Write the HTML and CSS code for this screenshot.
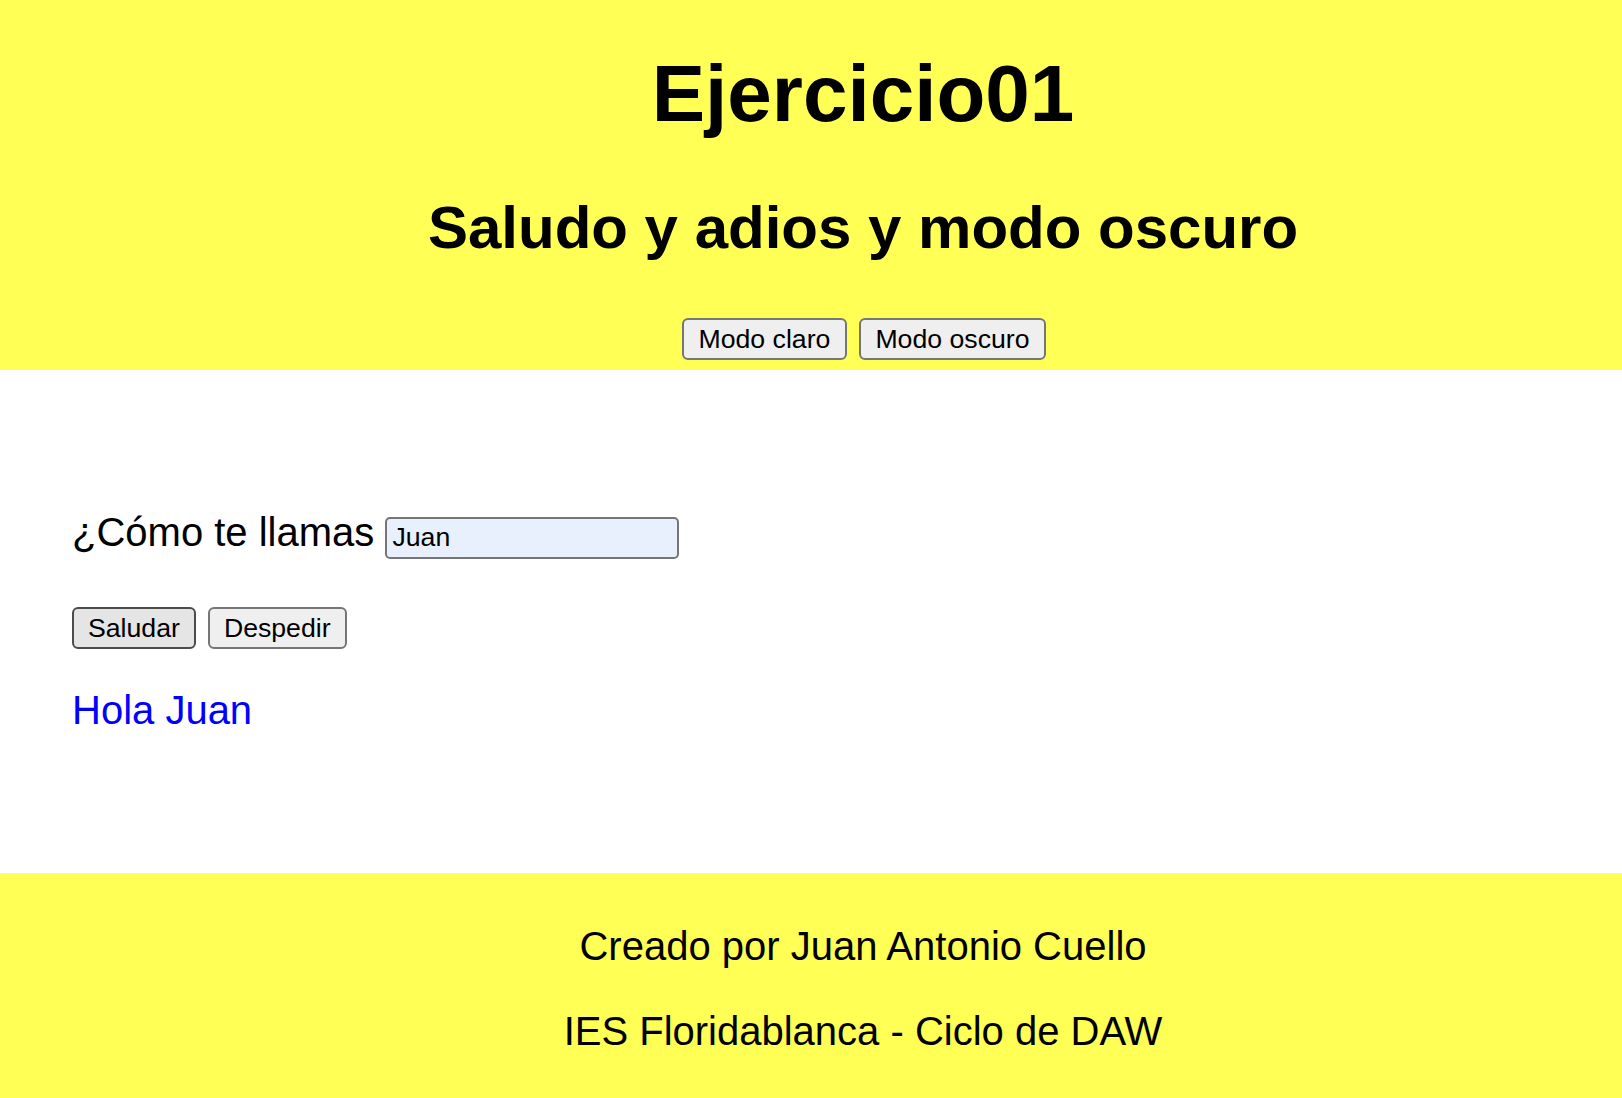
FILE: index.html
```html
<!DOCTYPE html>
<html lang="es">
<head>
<meta charset="utf-8">
<title>Ejercicio01</title>
<link rel="stylesheet" href="styles.css">
</head>
<body>
<header class="site-header">
  <h1 class="title">Ejercicio01</h1>
  <h2 class="subtitle">Saludo y adios y modo oscuro</h2>
  <div class="mode-buttons">
    <button class="btn">Modo claro</button>
    <button class="btn">Modo oscuro</button>
  </div>
</header>
<main class="content">
  <p class="question">¿Cómo te llamas <input class="name-input" type="text" value="Juan"></p>
  <div class="actions">
    <button class="btn btn-active">Saludar</button>
    <button class="btn">Despedir</button>
  </div>
  <p class="result">Hola Juan</p>
</main>
<footer class="site-footer">
  <p class="footer-line">Creado por Juan Antonio Cuello</p>
  <p class="footer-line">IES Floridablanca - Ciclo de DAW</p>
</footer>
</body>
</html>
```
FILE: styles.css
```css
html, body {
  margin: 0;
  padding: 0;
}
body {
  font-family: "Liberation Sans", Arial, Helvetica, sans-serif;
  font-size: 40px;
  color: #000;
  background: #fff;
}
.site-header {
  background: #ffff55;
  display: flow-root;
  text-align: center;
  padding: 0 0 10px 104px;
}
.title {
  font-size: 80px;
  font-weight: bold;
  line-height: normal;
  margin: 48px 0 53px;
}
.subtitle {
  font-size: 60px;
  font-weight: bold;
  line-height: normal;
  margin: 0 0 56px;
}
.mode-buttons {
  display: flex;
  justify-content: center;
  gap: 12px;
  padding-left: 2px;
}
.btn {
  font-family: "Liberation Sans", Arial, Helvetica, sans-serif;
  font-size: 26.67px;
  line-height: normal;
  color: #000;
  background: #efefef;
  border: 2px solid #767676;
  border-radius: 6px;
  padding: 4px 14.5px;
  height: 42px;
  margin: 0;
}
.btn-active {
  background: #e5e5e5;
  border-color: #4c4c4c;
}
.content {
  display: flow-root;
  padding: 100px 0 100px 72px;
}
.question {
  margin: 40px 0 0;
  line-height: normal;
}
.name-input {
  font-family: "Liberation Sans", Arial, Helvetica, sans-serif;
  font-size: 26.67px;
  color: #000;
  background: #e8f0fe;
  border: 2px solid #767676;
  border-radius: 5px;
  box-sizing: border-box;
  width: 294px;
  height: 42px;
  padding: 2px 5px;
  margin: 0;
}
.actions {
  display: flex;
  gap: 12px;
  margin-top: 48px;
  padding-left: 0;
}
.actions .btn {
  padding: 4px 14px;
}
.result {
  color: #0000ff;
  margin: 39px 0 40px;
  line-height: normal;
}
.site-footer {
  background: #ffff55;
  display: flow-root;
  text-align: center;
  padding: 11px 0 12px 104px;
}
.footer-line {
  margin: 40px 0;
  line-height: normal;
}
```
